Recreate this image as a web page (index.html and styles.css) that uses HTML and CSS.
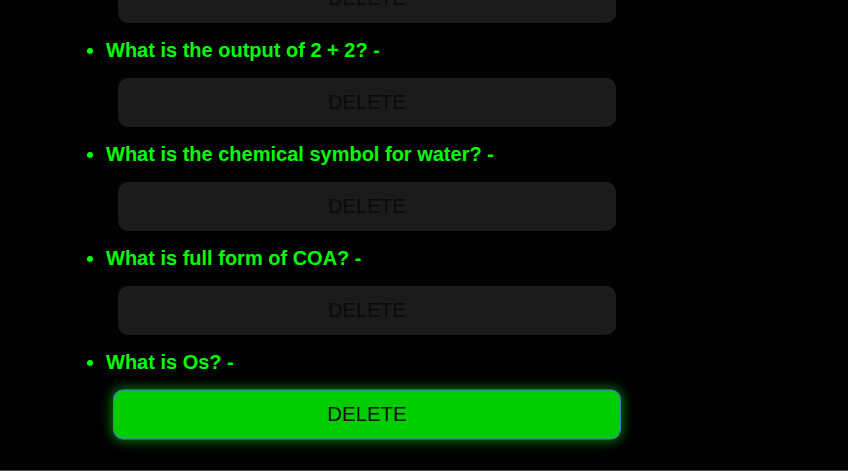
FILE: index.html
```html
<!DOCTYPE html>
<html lang="en">
<head>
<meta charset="utf-8">
<title>Questions</title>
<link rel="stylesheet" href="styles.css">
</head>
<body>
<ul class="questions">
  <li class="question">
    <span class="q-text">What is the capital of France? -</span>
    <button class="delete-btn">DELETE</button>
  </li>
  <li class="question">
    <span class="q-text">What is the output of 2 + 2? -</span>
    <button class="delete-btn">DELETE</button>
  </li>
  <li class="question">
    <span class="q-text">What is the chemical symbol for water? -</span>
    <button class="delete-btn">DELETE</button>
  </li>
  <li class="question">
    <span class="q-text">What is full form of COA? -</span>
    <button class="delete-btn">DELETE</button>
  </li>
  <li class="question">
    <span class="q-text">What is Os? -</span>
    <button class="delete-btn is-active">DELETE</button>
  </li>
</ul>
<div class="window-edge"></div>
</body>
</html>
```
FILE: styles.css
```css
html, body {
  margin: 0;
  padding: 0;
  background: #000;
  overflow: hidden;
  height: 471px;
}

.questions {
  margin: -65px 0 0 0;
  padding: 0 0 0 106px;
  font-family: "Liberation Sans", Arial, sans-serif;
  color: #00ff00;
}

.question {
  list-style: disc;
  font-size: 20px;
  font-weight: bold;
  line-height: 23px;
  margin: 0;
}

.q-text {
  display: block;
  height: 23px;
}

.delete-btn {
  display: block;
  box-sizing: border-box;
  width: 498px;
  height: 49px;
  margin: 16px 0 16px 12px;
  padding: 0;
  border: 1px solid transparent;
  border-radius: 10px;
  background: #1b1b1b;
  color: #0a0a0a;
  font-family: "Liberation Sans", Arial, sans-serif;
  font-size: 20px;
  font-weight: normal;
  text-align: center;
  cursor: pointer;
}

.delete-btn.is-active {
  background: #00cc00;
  color: #111;
  border-color: #5a6fe0;
  transform: scale(1.02);
  box-shadow: 0 0 10px 2px rgba(0, 255, 0, 0.45);
}

.window-edge {
  position: fixed;
  left: 0;
  right: 0;
  bottom: 0;
  height: 1px;
  background: #4a4a4a;
}
```
